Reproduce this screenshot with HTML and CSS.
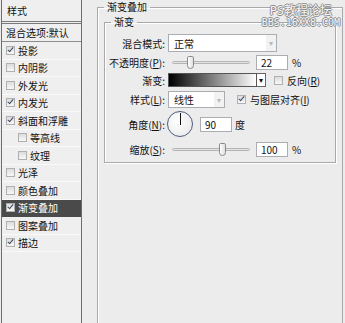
FILE: index.html
```html
<!DOCTYPE html>
<html lang="zh-CN">
<head>
    <meta charset="UTF-8">
    <title>图层样式 - 渐变叠加</title>
    <link rel="stylesheet" href="styles.css">
</head>
<body>
    <div class="dialog">
        <div class="style-list">
            <div class="list-head">样式</div>
            <div class="list-default">混合选项:默认</div>
            <div class="list-item"><span class="check on"></span>投影</div>
            <div class="list-item"><span class="check"></span>内阴影</div>
            <div class="list-item"><span class="check"></span>外发光</div>
            <div class="list-item"><span class="check on"></span>内发光</div>
            <div class="list-item"><span class="check on"></span>斜面和浮雕</div>
            <div class="list-item sub"><span class="check"></span>等高线</div>
            <div class="list-item sub"><span class="check"></span>纹理</div>
            <div class="list-item"><span class="check"></span>光泽</div>
            <div class="list-item"><span class="check"></span>颜色叠加</div>
            <div class="list-item selected"><span class="check on"></span>渐变叠加</div>
            <div class="list-item"><span class="check"></span>图案叠加</div>
            <div class="list-item"><span class="check on"></span>描边</div>
        </div>

        <div class="panel">
            <fieldset class="group outer">
                <legend>渐变叠加</legend>
                <fieldset class="group inner">
                    <legend>渐变</legend>

                    <div class="row row-mode">
                        <span class="label">混合模式:</span>
                        <div class="select wide">正常<span class="arrow dim">▾</span></div>
                    </div>

                    <div class="row row-opacity">
                        <span class="label">不透明度(<u>P</u>):</span>
                        <div class="slider"><span class="thumb" style="left: 14px"></span></div>
                        <div class="field">22</div>
                        <span class="unit">%</span>
                    </div>

                    <div class="row row-gradient">
                        <span class="label">渐变:</span>
                        <div class="gradient"></div>
                        <div class="grad-arrow">▾</div>
                        <span class="check reverse"></span>
                        <span class="opt">反向(<u>R</u>)</span>
                    </div>

                    <div class="row row-style">
                        <span class="label">样式(<u>L</u>):</span>
                        <div class="select narrow">线性<span class="arrow dim">▾</span></div>
                        <span class="check on align"></span>
                        <span class="opt">与图层对齐(<u>I</u>)</span>
                    </div>

                    <div class="row row-angle">
                        <span class="label">角度(<u>N</u>):</span>
                        <div class="dial"><span class="hand"></span></div>
                        <div class="field">90</div>
                        <span class="unit">度</span>
                    </div>

                    <div class="row row-scale">
                        <span class="label">缩放(<u>S</u>):</span>
                        <div class="slider"><span class="thumb" style="left: 46px"></span></div>
                        <div class="field">100</div>
                        <span class="unit">%</span>
                    </div>
                </fieldset>
            </fieldset>
        </div>

        <div class="watermark">
            <div class="wm-top">PS教程论坛</div>
            <div class="wm-bottom">BBS.16XX8.COM</div>
        </div>
    </div>
</body>
</html>
```

FILE: styles.css
```css
body {
    margin: 0;
    background-color: #ececec;
    font-family: "Noto Sans CJK SC", "Noto Sans", sans-serif;
    font-size: 10px;
    color: #111;
    overflow: hidden;
}

.dialog {
    position: relative;
    display: flex;
    width: 345px;
    height: 323px;
    overflow: hidden;
}

/* left style list */

.style-list {
    width: 79px;
    margin-left: 1px;
    border-left: 1px solid #6e6e6e;
    border-right: 1px solid #6e6e6e;
    background-color: #efefef;
}

.list-head {
    height: 21px;
    line-height: 21px;
    padding-left: 5px;
    border-bottom: 3px double #7a7a7a;
}

.list-default {
    height: 17px;
    line-height: 17px;
    padding-left: 4px;
    border-bottom: 1px solid #8c8c8c;
}

.list-item {
    display: flex;
    align-items: center;
    gap: 3px;
    height: 17.5px;
    padding-left: 4px;
    box-sizing: border-box;
    border-bottom: 1px solid #fafafa;
}

.list-item.sub {
    padding-left: 16px;
}

.list-item.selected {
    background-color: #4a4a4a;
    color: #fff;
    border-bottom-color: #4a4a4a;
}

.check {
    position: relative;
    flex: none;
    width: 7px;
    height: 7px;
    border: 1px solid #b0b0b0;
    background: linear-gradient(#dcdcdc, #f8f8f8);
}

.check.on::after {
    content: '';
    position: absolute;
    left: 2px;
    top: -1px;
    width: 2px;
    height: 5px;
    border: solid #3d4c66;
    border-width: 0 1.5px 1.5px 0;
    transform: rotate(40deg);
}

/* right panel */

.panel {
    width: 246px;
    height: 323px;
    margin-left: 15px;
    overflow: hidden;
}

.group {
    margin: 0;
    padding: 0;
    border: 1px solid #a9a9a9;
    box-shadow: inset 1px 1px 0 #fff, 1px 1px 0 #fff;
    min-width: 0;
}

.group legend {
    padding: 0 3px;
    line-height: 14px;
}

.outer {
    height: 340px;
    padding: 0 6px;
    box-shadow: inset 1px 1px 0 #fff, 2px 0 0 #c2c2c2;
}

.inner {
    margin-top: 1px;
    padding-bottom: 5px;
}

.inner legend {
    margin-left: 6px;
}

.row {
    display: flex;
    align-items: center;
}

.label {
    width: 60px;
    margin-right: 3px;
    text-align: right;
    white-space: nowrap;
}

.row-mode { height: 18px; margin-top: 5px; }
.row-opacity { height: 15px; margin-top: 3px; }
.row-gradient { height: 14px; margin-top: 3px; }
.row-style { height: 17px; margin-top: 4px; }
.row-angle { height: 26px; margin-top: 3px; }
.row-scale { height: 15px; margin-top: 5px; }

.select {
    display: flex;
    align-items: center;
    justify-content: space-between;
    height: 100%;
    box-sizing: border-box;
    padding-left: 5px;
    border: 1px solid #abadb3;
    background-color: #fff;
}

.select.wide { width: 109px; }
.select.narrow { width: 57px; }

.arrow {
    width: 10px;
    height: 100%;
    line-height: 15px;
    text-align: center;
    font-size: 8px;
    background-color: #f2f2f2;
    color: #b8b8b8;
}

.slider {
    position: relative;
    width: 78px;
    height: 3px;
    margin-left: 4px;
    border: 1px solid #b4b4b4;
    border-radius: 2px;
    background-color: #e4e4e4;
    box-sizing: border-box;
}

.thumb {
    position: absolute;
    top: -6px;
    width: 7px;
    height: 13px;
    box-sizing: border-box;
    border: 1px solid #8a8a8a;
    border-radius: 2px 2px 4px 4px;
    background: linear-gradient(to right, #fff, #dedede);
}

.field {
    width: 32px;
    height: 15px;
    margin-left: 6px;
    padding-left: 4px;
    box-sizing: border-box;
    line-height: 13px;
    border: 1px solid #abadb3;
    background-color: #fff;
}

.unit {
    margin-left: 4px;
}

.row-angle .unit {
    margin-left: 3px;
}

.gradient {
    width: 89px;
    height: 100%;
    box-sizing: border-box;
    border: 1px solid #555;
    background: linear-gradient(to right, #000, #fff);
}

.grad-arrow {
    width: 9px;
    height: 100%;
    box-sizing: border-box;
    border: 1px solid #666;
    border-left: none;
    background-color: #fff;
    font-size: 8px;
    line-height: 12px;
    text-align: center;
}

.check.reverse {
    margin-left: 8px;
}

.check.align {
    margin-left: 12px;
}

.opt {
    margin-left: 4px;
    white-space: nowrap;
}

.dial {
    position: relative;
    width: 26px;
    height: 26px;
    margin-left: -1px;
    box-sizing: border-box;
    border: 1px solid #4d5b79;
    border-radius: 50%;
    background: radial-gradient(circle at 40% 40%, #fff, #e6e6e6);
}

.hand {
    position: absolute;
    left: 11.5px;
    top: 1px;
    width: 1px;
    height: 12px;
    background-color: #111;
}

.row-angle .field {
    margin-left: 7px;
}

/* watermark */

.watermark {
    position: absolute;
    top: 5px;
    right: 5px;
    font-family: "DejaVu Sans Mono", "Noto Sans CJK SC", monospace;
    color: #f6f6f6;
    text-align: center;
    text-shadow: 1px 0 0 #8c8c8c, -1px 0 0 #8c8c8c, 0 1px 0 #8c8c8c, 0 -1px 0 #8c8c8c;
    line-height: 12px;
}

.wm-top {
    font-size: 12px;
}

.wm-bottom {
    font-size: 10px;
}
```
